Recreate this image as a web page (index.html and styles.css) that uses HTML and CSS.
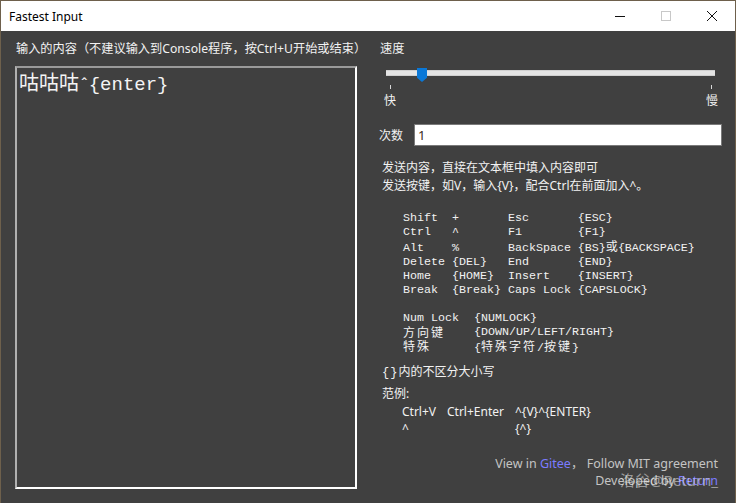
FILE: index.html
```html
<!DOCTYPE html>
<html lang="zh-CN">
<head>
<meta charset="utf-8">
<title>Fastest Input</title>
<link rel="stylesheet" href="styles.css">
</head>
<body>
<div class="window">
  <div class="titlebar">
    <div class="title">Fastest Input</div>
    <div class="controls">
      <div class="ctl"><svg width="12" height="12" viewBox="0 0 12 12"><path d="M1 6.5H11" stroke="#111" stroke-width="1"/></svg></div>
      <div class="ctl"><svg width="12" height="12" viewBox="0 0 12 12"><rect x="1.5" y="1.5" width="9" height="9" fill="none" stroke="#c8c8c8" stroke-width="1"/></svg></div>
      <div class="ctl"><svg width="12" height="12" viewBox="0 0 12 12"><path d="M1 1L11 11M11 1L1 11" stroke="#111" stroke-width="1"/></svg></div>
    </div>
  </div>
  <div class="content">
    <div class="left">
      <div class="label">输入的内容（不建议输入到Console程序，按Ctrl+U开始或结束）</div>
      <div class="editor"><span class="cjk-big">咕咕咕</span><span class="caret-sym">ˆ</span>{enter}</div>
    </div>
    <div class="right">
      <div class="label">速度</div>
      <div class="slider">
        <div class="track"></div>
        <div class="thumb"></div>
      </div>
      <div class="ticks"><span class="tick"></span><span class="tick"></span></div>
      <div class="speed-ends"><span>快</span><span>慢</span></div>
      <div class="count-row">
        <span class="count-label">次数</span>
        <div class="count-input">1</div>
      </div>
      <div class="desc">
        <div>发送内容，直接在文本框中填入内容即可</div>
        <div>发送按键，如V，输入{V}，配合Ctrl在前面加入^。</div>
      </div>
<pre class="keys">Shift  +       Esc       {ESC}
Ctrl   ^       F1        {F1}
Alt    %       BackSpace {BS}<span class="cjk-tight">或</span>{BACKSPACE}
Delete {DEL}   End       {END}
Home   {HOME}  Insert    {INSERT}
Break  {Break} Caps Lock {CAPSLOCK}</pre>
      <div class="keys2">
        <span>Num Lock</span><span>{NUMLOCK}</span>
        <span class="cjk">方向键</span><span>{DOWN/UP/LEFT/RIGHT}</span>
        <span class="cjk">特殊</span><span>{<span class="cjk">特殊字符</span>/<span class="cjk">按键</span>}</span>
      </div>
      <div class="note"><span class="mono">{}</span>内的不区分大小写</div>
      <div class="example-title">范例:</div>
      <div class="examples">
        <span>Ctrl+V</span><span>Ctrl+Enter</span><span>^{V}^{ENTER}</span>
        <span>^</span><span></span><span>{^}</span>
      </div>
      <div class="footer">
        <div>View in <span class="link">Gitee</span>， Follow MIT agreement</div>
        <div class="dev">Developed by <span class="link">Return</span>
          <span class="watermark">洛谷@Return_</span>
        </div>
      </div>
    </div>
  </div>
</div>
</body>
</html>
```

FILE: styles.css
```css
html, body {
  margin: 0;
  padding: 0;
  background: #404040;
}
body {
  width: 736px;
  height: 503px;
  overflow: hidden;
  font-family: "Noto Sans", "Noto Sans CJK SC", sans-serif;
  font-size: 12px;
}
.window {
  box-sizing: border-box;
  width: 736px;
  height: 503px;
  display: flex;
  flex-direction: column;
  border: 1px solid #6e604c;
  border-bottom: none;
}
.titlebar {
  height: 30px;
  background: #ffffff;
  display: flex;
  align-items: center;
  justify-content: space-between;
  flex-shrink: 0;
}
.title {
  padding-left: 8px;
  color: #000;
  font-size: 12px;
  font-family: "Noto Sans", "Liberation Sans", sans-serif;
}
.controls {
  display: flex;
  height: 100%;
}
.ctl {
  width: 46px;
  height: 100%;
  display: flex;
  align-items: center;
  justify-content: center;
}
.content {
  flex: 1;
  display: flex;
  gap: 22px;
  padding: 9px 13px 14px 14px;
  background: #404040;
  color: #f2f2f2;
  min-height: 0;
}
.left {
  width: 342px;
  display: flex;
  flex-direction: column;
}
.label {
  line-height: 17px;
  height: 17px;
  padding-left: 1px;
  white-space: nowrap;
  font-size: 12.2px;
}
.editor {
  flex: 1;
  margin-top: 9px;
  box-sizing: border-box;
  border-style: solid;
  border-width: 2px;
  border-color: #9a9a9a #ffffff #ffffff #b0b0b0;
  padding: 1px 2px;
  font-family: "Liberation Mono", "Noto Sans CJK SC", monospace;
  font-size: 19px;
  line-height: 26px;
  color: #f4f4f4;
}
.cjk-big {
  font-family: "Noto Sans CJK SC", sans-serif;
  font-size: 20px;
}
.caret-sym {
  font-family: "Noto Sans", sans-serif;
  font-size: 16px;
  padding: 0 1px 0 2px;
}
.right {
  flex: 1;
  display: flex;
  flex-direction: column;
  position: relative;
}
.slider {
  position: relative;
  height: 22px;
  margin: 4px 7px 0 7px;
  display: flex;
  align-items: center;
}
.track {
  flex: 1;
  height: 4px;
  margin-top: 2px;
  background: #e4e4e4;
  border: 1px solid #d0d0d0;
  border-left: none;
  border-right: none;
}
.thumb {
  position: absolute;
  left: 31px;
  top: 7px;
  width: 10px;
  height: 14px;
  background: #0a78d7;
  clip-path: polygon(0 0, 100% 0, 100% 70%, 50% 100%, 0 70%);
}
.ticks {
  display: flex;
  justify-content: space-between;
  padding: 0 10px 0 11px;
  margin-top: 2px;
  height: 4px;
}
.tick {
  width: 1px;
  height: 4px;
  background: #d8d8d8;
}
.speed-ends {
  display: flex;
  justify-content: space-between;
  padding: 0 4px 0 5px;
  margin-top: 3px;
  line-height: 17px;
  height: 17px;
}
.count-row {
  display: flex;
  align-items: center;
  margin-top: 15px;
  height: 22px;
}
.count-label {
  width: 35px;
}
.count-input {
  flex: 1;
  height: 22px;
  box-sizing: border-box;
  background: #fff;
  border: 1px solid #7a7a7a;
  color: #3a2a1a;
  padding-left: 3px;
  line-height: 20px;
  font-size: 13px;
}
.desc {
  margin-top: 13px;
  padding-left: 3px;
  line-height: 18px;
}
.keys {
  margin: 16px 0 0 24px;
  font-family: "Liberation Mono", monospace;
  font-size: 11.67px;
  line-height: 14px;
  color: #f2f2f2;
}
.cjk {
  font-family: "Noto Sans CJK SC", sans-serif;
  font-size: 12px;
  letter-spacing: 2px;
}
.cjk-tight {
  font-family: "Noto Sans CJK SC", sans-serif;
  font-size: 12px;
}
.keys2 {
  margin: 14px 0 0 24px;
  display: grid;
  grid-template-columns: 71px auto;
  font-family: "Liberation Mono", "Noto Sans CJK SC", monospace;
  font-size: 11.67px;
  line-height: 14px;
}
.note {
  margin-top: 8px;
  padding-left: 3px;
  line-height: 18px;
}
.mono {
  font-family: "Liberation Mono", monospace;
  letter-spacing: 1px;
}
.example-title {
  margin-top: 3px;
  padding-left: 3px;
  line-height: 18px;
}
.examples {
  display: grid;
  grid-template-columns: 45px 68px auto;
  padding-left: 23px;
  line-height: 17px;
}
.footer {
  margin-top: auto;
  text-align: right;
  padding-right: 4px;
  line-height: 17px;
  color: #c4c4c4;
  font-size: 12.5px;
}
.link {
  color: #7b7bff;
}
.dev {
  position: relative;
}
.watermark {
  position: absolute;
  right: 0;
  top: -2px;
  font-size: 15px;
  line-height: 20px;
  color: rgba(235, 235, 235, 0.55);
  font-family: "Noto Sans", "Noto Sans CJK SC", sans-serif;
  white-space: nowrap;
}
```
